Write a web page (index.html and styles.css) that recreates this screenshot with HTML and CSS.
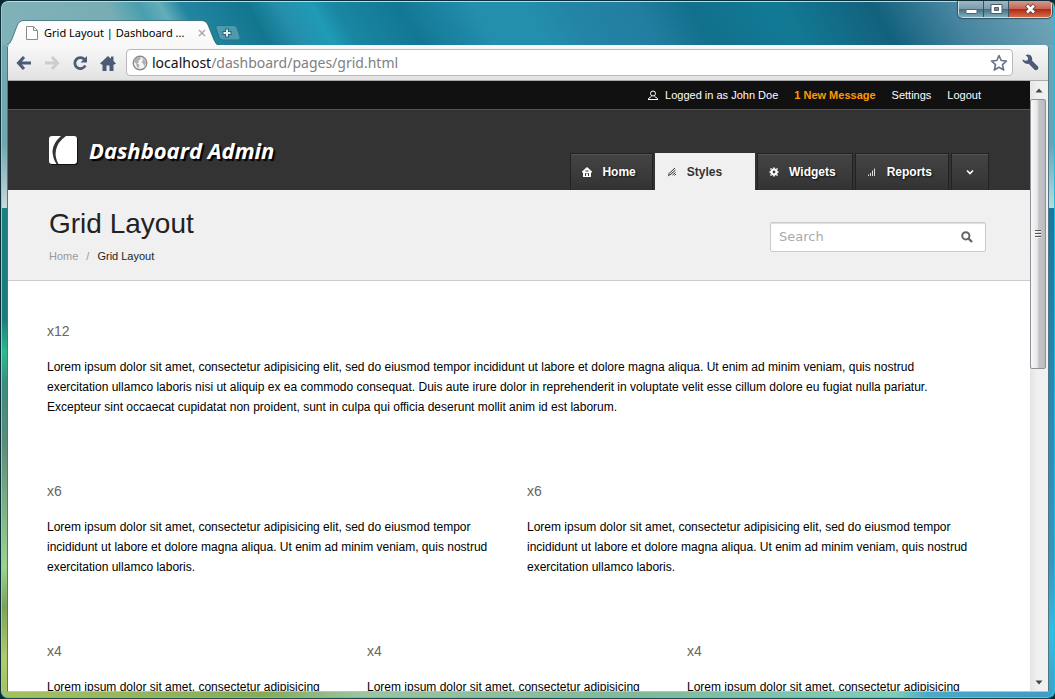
FILE: index.html
```html
<!DOCTYPE html>
<html lang="en">
<head>
<meta charset="utf-8">
<title>Grid Layout | Dashboard Admin</title>
<link rel="stylesheet" href="styles.css">
</head>
<body>
<div class="window">
  <div class="titlebar">
    <div class="tab">
      <svg class="tab-shape" width="212" height="26" viewBox="0 0 212 26" aria-hidden="true">
        <defs><linearGradient id="tabfill" x1="0" y1="0" x2="0" y2="1"><stop offset="0" stop-color="#fff"/><stop offset="1" stop-color="#f7f7f7"/></linearGradient></defs>
        <path d="M0 25.500Q3 24 5 19L10 6Q12 .5 17 .5H194Q199 .5 201 5L207 20Q209 25 212 25.500V26H0Z" fill="url(#tabfill)"/>
        <path d="M0 25Q3 24 5 19L10 6Q12 .5 17 .5H194Q199 .5 201 5L207 20Q209 25 212 25" fill="none" stroke="#24606c" stroke-opacity=".75"/>
      </svg>
      <div class="tab-content">
        <svg width="12" height="14" viewBox="0 0 12 14" aria-hidden="true"><path d="M.5.5H7.500L11.500 4.500V13.500H.5ZM7.500.5V4.500H11.500" fill="#fff" stroke="#8b8b8b"/></svg>
        <span class="tab-title">Grid Layout | Dashboard ...</span>
        <button class="tab-close" aria-label="Close tab"><svg width="8" height="8" viewBox="0 0 8 8"><path d="M1 1L7 7M7 1L1 7" stroke="#aaa" stroke-width="1.500"/></svg></button>
      </div>
    </div>
    <button class="new-tab" aria-label="New tab"><svg width="26" height="16" viewBox="0 0 26 16"><path d="M3 .5H19Q21 .5 22 3L25 12Q26 15 23 15H8Q5 15 4 12L1 3Q0 .5 3 .5Z" fill="#5ea4b5" fill-opacity=".75" stroke="#2e6f80"/><path d="M12 3.500V12.500M7.500 8H16.500" stroke="#2c6676" stroke-width="4"/><path d="M12 4.500V11.500M8.500 8H15.500" stroke="#e0eef2" stroke-width="2"/></svg></button>
    <div class="controls">
      <button class="control" aria-label="Minimize"><svg width="13" height="12" viewBox="0 0 13 12"><rect x="1" y="6.500" width="11" height="4" rx="1" fill="#fff" stroke="#53616b"/></svg></button>
      <button class="control" aria-label="Maximize"><svg width="13" height="12" viewBox="0 0 13 12"><path d="M1 1.500H12V10.500H1Z" fill="#fff" stroke="#4c5b66"/><path d="M4.500 4.500H8.500V7.500H4.500Z" fill="#6a95a5" stroke="#4c5b66"/></svg></button>
      <button class="control control-close" aria-label="Close"><svg width="13" height="12" viewBox="0 0 13 12"><path d="M2.500 2L10.500 10M10.500 2L2.500 10" stroke="#6b4440" stroke-width="4.500"/><path d="M3 2.500L10 9.500M10 2.500L3 9.500" stroke="#fff" stroke-width="2.500"/></svg></button>
    </div>
  </div>

  <div class="browser">
    <div class="toolbar">
      <button class="tool" aria-label="Back"><svg width="16" height="16" viewBox="0 0 16 16"><path d="M8 2L2.500 8L8 14M3 8H15" fill="none" stroke="#4c5a75" stroke-width="3"/></svg></button>
      <button class="tool" aria-label="Forward"><svg width="16" height="16" viewBox="0 0 16 16"><path d="M8 2L13.500 8L8 14M13 8H1" fill="none" stroke="#cbcdd0" stroke-width="3"/></svg></button>
      <button class="tool" aria-label="Reload"><svg width="16" height="16" viewBox="0 0 16 16"><path d="M12.500 4.500A5.500 5.500 0 1 0 13.300 10.500" fill="none" stroke="#4c5a75" stroke-width="2.800"/><path d="M15 1V7.500H8.500Z" fill="#4c5a75"/></svg></button>
      <button class="tool" aria-label="Home page"><svg width="16" height="16" viewBox="0 0 16 16"><path d="M8 1L0 8.500L1.500 9.500H2.500V16H6.500V10.500H9.500V16H13.500V9.500H14.500L16 8.500L13.500 6V1.500H11V3.800Z" fill="#4c5a75"/></svg></button>
      <div class="address">
        <svg width="16" height="16" viewBox="0 0 16 16" aria-hidden="true"><circle cx="8" cy="8" r="6.800" fill="#f5f5f5" stroke="#8b8b8b" stroke-width="1.400"/><path d="M2 5Q4 2 8 2L9 4L6.500 5.500L7 7.500L5 8L7.500 10L6.500 13.500L4.500 11L4 8.500L2 7Z M10 3L13 5L14 8L12.500 11L11 8.500L9.500 7L11 5.500Z" fill="#b0b0b0"/></svg>
        <span class="url"><span class="host">localhost</span>/dashboard/pages/grid.html</span>
        <button class="tool" aria-label="Bookmark"><svg width="18" height="18" viewBox="0 0 18 18"><path d="M9 1.500L11.200 6.500L16.500 7L12.500 10.700L13.700 16L9 13.200L4.300 16L5.500 10.700L1.500 7L6.800 6.500Z" fill="#fff" stroke="#66728a" stroke-width="1.600" stroke-linejoin="round"/></svg></button>
      </div>
      <button class="tool wrench" aria-label="Customize"><svg width="17" height="17" viewBox="0 0 17 17"><path d="M3.500 1Q8-.5 9.800 3Q10.500 5 10 6.500L16 12.500Q17 14 15.700 15.500Q14 17 12.500 15.800L6.700 9.800Q3 10.500 1 7.500L.3 5.200L3.200 6.800L5.800 6.200L6 3.500Z" fill="#4c5a75"/></svg></button>
    </div>

    <div class="viewport">
      <div class="page">
        <div class="topbar">
          <div class="container topbar-inner">
            <span class="user"><svg width="10" height="10" viewBox="0 0 10 10" aria-hidden="true"><circle cx="5" cy="3.500" r="2.500" fill="none" stroke="#fff"/><path d="M0 9.500H10M.5 9.500V8.500L3.500 6.500M9.500 9.500V8.500L6.500 6.500" fill="none" stroke="#fff"/></svg>Logged in as John Doe</span>
            <a class="message" href="#messages">1 New Message</a>
            <a href="#settings">Settings</a>
            <a href="#logout">Logout</a>
          </div>
        </div>
        <header class="header">
          <div class="container header-inner">
            <a class="brand" href="#home">
              <svg width="29" height="29" viewBox="0 0 29 29" aria-hidden="true"><rect x="1" y="1" width="28" height="28" rx="3" fill="#111"/><rect width="28" height="28" rx="3" fill="#fff"/><path d="M12 0Q4 7 3.500 15Q3.500 22 7.500 28H9.500Q5.500 21 7 14Q8.500 6 17 0Z" fill="#333"/></svg>
              <span>Dashboard Admin</span>
            </a>
            <nav class="nav">
              <a href="#home"><svg width="10" height="10" viewBox="0 0 10 10"><path d="M5 0L10 4.500V5.500H9V10H1V5.500H0V4.500Z" fill="#fff"/><path d="M3.500 4H6.500M3.500 9V6.500H4.500M6.500 9V6.500H5.500" stroke="#333" fill="none"/></svg>Home</a>
              <a class="active" href="#styles"><svg width="10" height="10" viewBox="0 0 10 10"><path d="M1 7.500L8 1M3 8L8.500 3M5.500 8L8.500 5.500M7.500 8.500L9 7M1 9L3 7.500" stroke="#333" fill="none"/></svg>Styles</a>
              <a href="#widgets"><svg width="10" height="10" viewBox="0 0 10 10"><circle cx="5" cy="5" r="2.500" fill="none" stroke="#fff" stroke-width="2.200"/><path d="M5 .5V2M5 8V9.500M.5 5H2M8 5H9.500M1.500 1.500L2.500 2.500M7.500 7.500L8.500 8.500M1.500 8.500L2.500 7.500M7.500 2.500L8.500 1.500" stroke="#fff" stroke-width="1.600"/></svg>Widgets</a>
              <a href="#reports"><svg width="10" height="10" viewBox="0 0 10 10"><path d="M1.500 9V7.500M3.500 9V6M5.500 9V3.500M7.500 9V1.500" stroke="#ddd"/></svg>Reports</a>
              <button class="more" aria-label="More sections"><svg width="10" height="10" viewBox="0 0 10 10"><path d="M2 3.500L5 6.500L8 3.500" fill="none" stroke="#fff" stroke-width="1.600"/></svg></button>
            </nav>
          </div>
        </header>
        <div class="subheader">
          <div class="container subheader-inner">
            <div>
              <h1>Grid Layout</h1>
              <div class="crumbs"><a href="#home">Home</a><span>/</span><span class="current">Grid Layout</span></div>
            </div>
            <form class="search">
              <input type="text" placeholder="Search" aria-label="Search">
              <button type="button" aria-label="Submit search"><svg width="12" height="12" viewBox="0 0 12 12"><circle cx="4.800" cy="4.800" r="3.600" fill="none" stroke="#666" stroke-width="2"/><path d="M7.500 7.500L11 11" stroke="#666" stroke-width="2.400"/></svg></button>
            </form>
          </div>
        </div>
        <main class="container content">
          <section class="x12"><h2>x12</h2><p>Lorem ipsum dolor sit amet, consectetur adipisicing elit, sed do eiusmod tempor incididunt ut labore et dolore magna aliqua. Ut enim ad minim veniam, quis nostrud exercitation ullamco laboris nisi ut aliquip ex ea commodo consequat. Duis aute irure dolor in reprehenderit in voluptate velit esse cillum dolore eu fugiat nulla pariatur. Excepteur sint occaecat cupidatat non proident, sunt in culpa qui officia deserunt mollit anim id est laborum.</p></section>
          <section class="x6"><h2>x6</h2><p>Lorem ipsum dolor sit amet, consectetur adipisicing elit, sed do eiusmod tempor incididunt ut labore et dolore magna aliqua. Ut enim ad minim veniam, quis nostrud exercitation ullamco laboris.</p></section>
          <section class="x6"><h2>x6</h2><p>Lorem ipsum dolor sit amet, consectetur adipisicing elit, sed do eiusmod tempor incididunt ut labore et dolore magna aliqua. Ut enim ad minim veniam, quis nostrud exercitation ullamco laboris.</p></section>
          <section class="x4"><h2>x4</h2><p>Lorem ipsum dolor sit amet, consectetur adipisicing</p></section>
          <section class="x4"><h2>x4</h2><p>Lorem ipsum dolor sit amet, consectetur adipisicing</p></section>
          <section class="x4"><h2>x4</h2><p>Lorem ipsum dolor sit amet, consectetur adipisicing</p></section>
        </main>
      </div>
      <div class="scrollbar">
        <button class="scroll-step" aria-label="Scroll up"><svg width="8" height="5" viewBox="0 0 8 5"><path d="M4 .5L7.500 4.500H.5Z" fill="#444"/></svg></button>
        <div class="scroll-track"><div class="scroll-thumb"><svg width="8" height="9" viewBox="0 0 8 9"><path d="M1 1.500H7M1 4.500H7M1 7.500H7" stroke="#555"/><path d="M1 2.500H7M1 5.500H7M1 8.500H7" stroke="#fff" stroke-opacity=".7"/></svg></div></div>
        <button class="scroll-step" aria-label="Scroll down"><svg width="8" height="5" viewBox="0 0 8 5"><path d="M4 4.500L7.500 .5H.5Z" fill="#444"/></svg></button>
      </div>
    </div>
  </div>
</div>
</body>
</html>
```
FILE: styles.css
```css
* { box-sizing: border-box; }

body {
  margin: 0;
  background: #06292f;
  color: #000;
  font: 12px/20px "Liberation Sans", Arial, sans-serif;
}

a { color: inherit; text-decoration: none; }
button { margin: 0; padding: 0; border: 0; background: none; font: inherit; }
svg { display: block; flex: none; }
h1, h2, p { margin: 0; font-weight: normal; }

/* Glass window frame */
.window {
  display: flex;
  flex-direction: column;
  height: 100vh;
  padding: 0 5px 6px 6px;
  overflow: hidden;
  border: 1px solid #0b3039;
  border-right-color: #20c0dc;
  border-bottom-color: #164c52;
  border-radius: 8px;
  box-shadow: inset 0 1px #b9dbe2, inset 1px 0 #9ac8cb, inset 0 -1px #39cfe2;
  background:
    linear-gradient(#76aab2, #6fa6ae 15%, #c9dadd 25%, #1c7f80 25%, #1d7c7c 42%, #2bbb8d 47%, #3a8c7c 52%, #5b8d79 61%, #9bd490 80%, #7ba45a 86%, #b3cb6c 94%, #a1bf60) left bottom / 7px calc(100% - 44px) no-repeat,
    linear-gradient(#6ba5b7, #6aa2b6 15%, #b9dbe3 25%, #1c76a3 25%, #2b87b4 53%, #3b93c0 79%, #36bce4 90%, #3f9ecb) right bottom / 7px calc(100% - 44px) no-repeat,
    linear-gradient(90deg, #a6c161, #84aa58 25%, #9ac5a0 34%, #80b999 60%, #7cceba 85%, #48aac8 88%, #3f9bc5) bottom / 100% 8px no-repeat,
    linear-gradient(60deg, #82b2b9, #78adb5 12%, #4a9fae 15%, #63aeb9 17%, #2385a0 19%, #13768f 25%, #258fab 28%, #1f9bb6 31%, #1a87a2 33%, #127794 39%, #248ead 46%, #248ead 51%, #2384a5 55%, #227ea0 61%, #11708c 66%, #127a95 74%, #12617d 83%, #4684a0 90%, #75a9ba) top / 100% 46px no-repeat,
    #6ba1ae;
}

.titlebar { display: flex; height: 44px; padding-top: 19px; flex: none; }
.tab { display: grid; width: 212px; height: 26px; flex: none; }
.tab-shape, .tab-content { grid-area: 1 / 1; }
.tab-content { display: flex; align-items: center; padding: 0 13px 0 19px; z-index: 1; }
.tab-title { flex: 1; margin-left: 6px; font: 11px/20px "Noto Sans", "Open Sans", sans-serif; white-space: nowrap; }
.new-tab { align-self: flex-start; margin: 5px 0 0 -4px; }

.controls {
  display: flex;
  align-self: flex-start;
  height: 18px;
  margin: -20px -3px 0 auto;
  overflow: hidden;
  border: 1px solid #cbdde2;
  border-top: 0;
  border-radius: 0 0 5px 5px;
  box-shadow: 0 0 1px 1px #31515c;
}
.control {
  display: flex;
  align-items: center;
  justify-content: center;
  width: 25px;
  border-right: 1px solid #38515f;
  background: linear-gradient(#a4bac5, #7d9dae 50%, #44697d 52%, #7cafbd);
}
.control-close { width: 42px; border: 0; background: linear-gradient(#d8a096, #c56657 50%, #b1230f 52%, #d66a48); }

/* Browser chrome */
.browser { display: flex; flex-direction: column; flex: 1; min-height: 0; background: #fff; border: 1px solid #477984; border-top: 0; border-bottom-color: #b4c6b8; border-radius: 3px 4px 0 0; }
.toolbar {
  display: flex;
  align-items: center;
  gap: 12px;
  height: 36px;
  padding: 0 9px 0 8px;
  flex: none;
  border-bottom: 1px solid #aaa;
  border-radius: 3px 4px 0 0;
  background: linear-gradient(#f9f9f9, #e2e2e2);
}
.address {
  display: flex;
  align-items: center;
  flex: 1;
  height: 27px;
  margin: 0 -3px 0 -2px;
  padding: 0 4px 0 5px;
  border: 1px solid #b8b8b8;
  border-radius: 4px;
  background: #fff;
}
.url { flex: 1; margin-left: 4px; color: #808080; font: 14px/20px "Noto Sans", "Open Sans", sans-serif; }
.host { color: #111; }

.viewport { display: flex; flex: 1; min-height: 0; }
.page { flex: 1; min-width: 0; overflow: hidden; background: #fff; }

.scrollbar { display: flex; flex-direction: column; width: 18px; padding-right: 1px; flex: none; background: linear-gradient(90deg, #e3e3e3, #f0f0f0 40%); }
.scroll-step { display: flex; align-items: center; justify-content: center; height: 18px; flex: none; }
.scroll-track { flex: 1; }
.scroll-thumb {
  display: flex;
  align-items: center;
  justify-content: center;
  width: 16px;
  height: 47%;
  border: 1px solid #8f9194;
  border-radius: 2px;
  background: linear-gradient(90deg, #f8f8f8, #e6e6e8 45%, #c5c5c9 55%, #b9babf);
}

/* Dashboard page */
.container { max-width: 944px; margin: 0 auto; padding: 0 2px; }

.topbar { background: #111; color: #fff; font-size: 11px; }
.topbar-inner { display: flex; align-items: center; justify-content: flex-end; gap: 16px; height: 28px; padding-right: 10px; }
.user { display: flex; align-items: center; gap: 7px; }
.message { color: #f90; font-weight: bold; }

.header { border-top: 1px solid #555; background: #333; color: #fff; }
.header-inner { display: flex; justify-content: space-between; align-items: flex-end; height: 80px; }
.brand {
  display: flex;
  align-items: center;
  gap: 11px;
  padding-bottom: 25px;
  font: italic bold 22px/29px "Open Sans", "Noto Sans", sans-serif;
  text-shadow: 2px 2px 1px #000;
}
.nav { display: flex; gap: 2px; font-weight: bold; text-shadow: 1px 1px 2px #111; }
.nav a, .more {
  display: flex;
  align-items: center;
  gap: 10px;
  height: 37px;
  padding: 0 16px 0 11px;
  border: 1px solid #222;
  border-bottom: 0;
  background: linear-gradient(#444, #333);
  box-shadow: inset 0 1px #555;
}
.nav .active { padding-right: 32px; border-color: #f0f0f0; background: #f0f0f0; color: #333; text-shadow: none; box-shadow: none; }
.nav .more { padding: 0 13px; }

.subheader { border-bottom: 1px solid #ccc; background: #f0f0f0; }
.subheader-inner { display: flex; justify-content: space-between; align-items: flex-start; height: 90px; padding-top: 16px; }
h1 { color: #222; font-size: 28px; line-height: 36px; }
.crumbs { display: flex; gap: 8px; margin-top: 4px; color: #999; font-size: 11px; }
.current { color: #222; }
.search {
  display: flex;
  align-items: center;
  width: 216px;
  height: 30px;
  margin: 16px 3px 0 0;
  padding: 0 12px 0 8px;
  border: 1px solid #ccc;
  border-radius: 2px;
  background: #fff;
  box-shadow: inset 0 1px 1px #ddd;
}
.search input { flex: 1; min-width: 0; padding: 0; border: 0; outline: 0; background: none; font: 13px/20px "DejaVu Sans", sans-serif; }
.search input::placeholder { color: #aaa; opacity: 1; }

.content { display: grid; grid-template-columns: repeat(12, 1fr); gap: 60px 20px; padding: 40px 4px 0 0; }
.x12 { grid-column: span 12; padding-right: 24px; }
.x6 { grid-column: span 6; }
.x4 { grid-column: span 4; }
h2 { margin-bottom: 16px; color: #666; font-size: 14px; line-height: 20px; }
.content p { min-height: 64px; }
```
